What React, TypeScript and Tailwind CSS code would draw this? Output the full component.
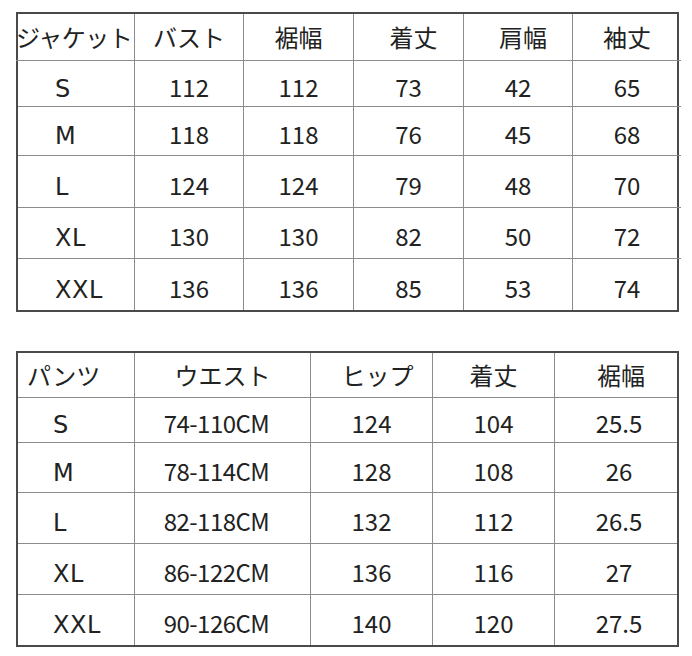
const font = { fontFamily: '"Noto Sans CJK JP", "Noto Sans", sans-serif' };

type TableProps = {
  cols: string;
  heights: string[];
  header: string[];
  rows: string[][];
  headerCls: string[];
  bodyCls: string[];
};

function SizeTable({ cols, heights, header, rows, headerCls, bodyCls }: TableProps) {
  const all = [header, ...rows];
  return (
    <div className={`grid ${cols} border-2 border-[#4a4a4a] w-[663px] ml-[16px]`}>
      {all.map((row, r) =>
        row.map((cell, c) => {
          const lastCol = c === row.length - 1;
          const lastRow = r === all.length - 1;
          const extra = r === 0 ? headerCls[c] : bodyCls[c];
          return (
            <div
              key={`${r}-${c}`}
              className={`flex items-center leading-none text-[#222] border-[#8c8c8c] ${heights[r]} ${
                lastCol ? '' : 'border-r'
              } ${lastRow ? '' : 'border-b'} ${r === 0 ? 'pt-0' : c === 0 ? 'pt-[10px]' : 'pt-[6px]'} ${extra}`}
            >
              {cell}
            </div>
          );
        })
      )}
    </div>
  );
}

const sizeCol =
  "pl-[37px] text-[24px] font-['DejaVu_Sans',sans-serif] tracking-[0.5px]";

export default function App() {
  return (
    <div className="w-[692px] h-[656px] bg-white overflow-hidden" style={font}>
      <div className="pt-[12px]">
        <SizeTable
          cols="grid-cols-[117px_109px_110px_110px_109px_108px]"
          heights={['h-[47px]', 'h-[46px]', 'h-[49px]', 'h-[52px]', 'h-[51px]', 'h-[51px]']}
          header={['ジャケット', 'バスト', '裾幅', '着丈', '肩幅', '袖丈']}
          rows={[
            ['S', '112', '112', '73', '42', '65'],
            ['M', '118', '118', '76', '45', '68'],
            ['L', '124', '124', '79', '48', '70'],
            ['XL', '130', '130', '82', '50', '72'],
            ['XXL', '136', '136', '85', '53', '74'],
          ]}
          headerCls={[
            'text-[24px] -ml-[2px] whitespace-nowrap tracking-[-0.5px]',
            'text-[24px] justify-center',
            'text-[24px] justify-center',
            'text-[24px] justify-center pl-[10px]',
            'text-[24px] justify-center pl-[10px]',
            'text-[24px] justify-center',
          ]}
          bodyCls={[
            sizeCol,
            'text-[24px] justify-center',
            'text-[24px] justify-center',
            'text-[24px] justify-center',
            'text-[24px] justify-center',
            'text-[24px] justify-center',
          ]}
        />
      </div>
      <div className="pt-[39px]">
        <SizeTable
          cols="grid-cols-[117px_176px_122px_122px_122px]"
          heights={['h-[45px]', 'h-[45px]', 'h-[50px]', 'h-[51px]', 'h-[51px]', 'h-[50px]']}
          header={['パンツ', 'ウエスト', 'ヒップ', '着丈', '裾幅']}
          rows={[
            ['S', '74-110CM', '124', '104', '25.5'],
            ['M', '78-114CM', '128', '108', '26'],
            ['L', '82-118CM', '132', '112', '26.5'],
            ['XL', '86-122CM', '136', '116', '27'],
            ['XXL', '90-126CM', '140', '120', '27.5'],
          ]}
          headerCls={[
            'text-[24px] pl-[9px]',
            'text-[24px] justify-center',
            'text-[24px] justify-center pl-[12px]',
            'text-[24px] justify-center',
            'text-[24px] justify-center pl-[10px]',
          ]}
          bodyCls={[
            "pl-[35px] text-[24px] font-['DejaVu_Sans',sans-serif] tracking-[0.5px]",
            'text-[24px] justify-center pr-[12px] tracking-[-0.5px]',
            'text-[24px] justify-center',
            'text-[24px] justify-center',
            'text-[24px] justify-center pl-[6px]',
          ]}
        />
      </div>
    </div>
  );
}
